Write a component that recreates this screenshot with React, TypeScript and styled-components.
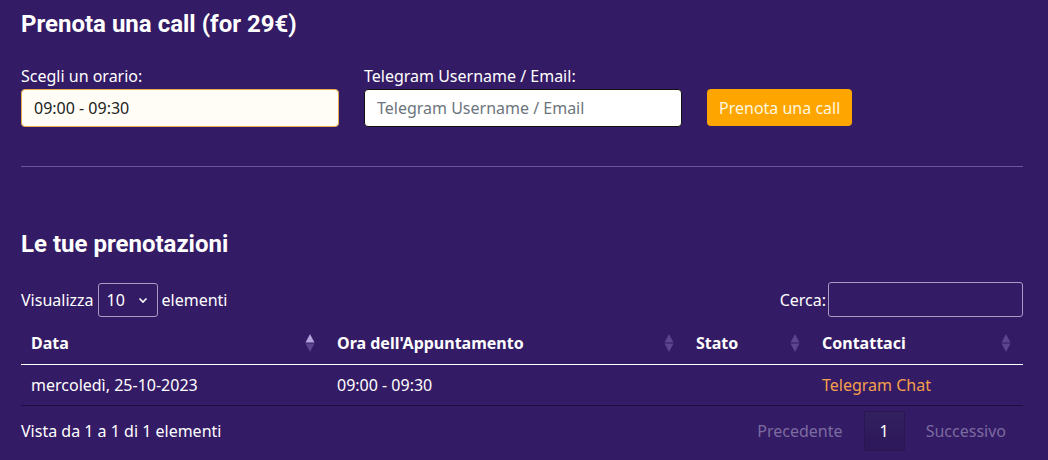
import React, { useState } from 'react';
import styled, { createGlobalStyle } from 'styled-components';

const GlobalStyle = createGlobalStyle`
  html, body {
    margin: 0;
    padding: 0;
    background: #341b65;
  }
  body {
    font-family: 'Noto Sans', 'Open Sans', sans-serif;
    color: #ffffff;
    font-size: 16px;
  }
  * { box-sizing: border-box; }
`;

const Page = styled.div`
  padding: 0 25px 0 21px;
  min-height: 460px;
`;

const Heading = styled.h2<{ $top: number }>`
  font-family: Roboto, 'Liberation Sans', sans-serif;
  font-weight: 700;
  font-size: 24px;
  line-height: 28px;
  margin: 0;
  padding-top: ${(p) => p.$top}px;
`;

const FormRow = styled.form`
  display: flex;
  align-items: flex-end;
  gap: 25px;
  margin-top: 27px;
`;

const Field = styled.label`
  display: flex;
  flex-direction: column;
  gap: 2px;
  font-size: 16px;
  line-height: 22px;
`;

const TextInput = styled.input<{ $focused?: boolean }>`
  width: 318px;
  height: 38px;
  border-radius: 4px;
  border: 1px solid ${(p) => (p.$focused ? '#e8a94c' : '#111')};
  background: ${(p) => (p.$focused ? '#fffdf6' : '#fff')};
  padding: 0 12px;
  font-family: 'Noto Sans', sans-serif;
  font-size: 16px;
  color: #222;
  outline: none;
  &::placeholder { color: #6c757d; }
`;

const SubmitButton = styled.button`
  height: 37px;
  padding: 0 12px;
  margin-bottom: 1px;
  background: #ffa500;
  color: #fff7df;
  border: none;
  border-radius: 4px;
  font-family: 'Noto Sans', sans-serif;
  font-size: 16px;
`;

const Divider = styled.hr`
  border: none;
  border-top: 1px solid #6b55a0;
  margin: 39px 0 0;
`;

const Controls = styled.div`
  display: flex;
  justify-content: space-between;
  align-items: center;
  margin-top: 24px;
  font-size: 16px;
`;

const Inline = styled.label`
  display: flex;
  align-items: center;
  gap: 4px;
`;

const Select = styled.select`
  appearance: none;
  width: 60px;
  height: 34px;
  border: 1px solid #a89cc4;
  border-radius: 3px;
  background: transparent url("data:image/svg+xml,%3Csvg xmlns='http://www.w3.org/2000/svg' width='10' height='8' viewBox='0 0 10 8'%3E%3Cpath d='M1.5 2.5 5 6l3.5-3.5' fill='none' stroke='%23fff' stroke-width='1.6'/%3E%3C/svg%3E") no-repeat right 9px center;
  color: #fff;
  font-family: 'Noto Sans', sans-serif;
  font-size: 16px;
  padding: 0 0 0 8px;
`;

const SearchInput = styled.input`
  width: 195px;
  height: 35px;
  border: 1px solid #a89cc4;
  border-radius: 3px;
  background: transparent;
  color: #fff;
  margin-left: -2px;
`;

const Table = styled.table`
  width: 100%;
  border-collapse: collapse;
  margin-top: 5px;
  font-size: 16px;
`;

const Th = styled.th<{ $w: number }>`
  width: ${(p) => p.$w}px;
  text-align: left;
  font-weight: 700;
  padding: 8px 10px;
  height: 42px;
  border-bottom: 1px solid #ffffff;
`;

const ThInner = styled.div`
  display: flex;
  justify-content: space-between;
  align-items: center;
  padding-right: 2px;
`;

const Td = styled.td`
  padding: 8px 10px;
  height: 41px;
  border-bottom: 1px solid #1e0d40;
`;

const Link = styled.a`
  color: #f5a04a;
  text-decoration: none;
`;

const Footer = styled.div`
  display: flex;
  justify-content: space-between;
  align-items: center;
  margin-top: 5px;
`;

const Pager = styled.div`
  display: flex;
  align-items: center;
`;

const PageLink = styled.span<{ $active?: boolean }>`
  height: 40px;
  display: flex;
  align-items: center;
  padding: 0 ${(p) => (p.$active ? 15 : 16)}px;
  margin: 0 ${(p) => (p.$active ? 4 : 0)}px;
  color: ${(p) => (p.$active ? '#ffffff' : '#7b6ba0')};
  background: ${(p) => (p.$active ? 'linear-gradient(#33205f, #2c185a)' : 'transparent')};
  border: 1px solid ${(p) => (p.$active ? '#2a1650' : 'transparent')};
  border-radius: 2px;
`;

const SortIcon = ({ active }: { active?: boolean }) => (
  <svg width="10" height="20" viewBox="0 0 10 20">
    <path d="M5 1 9.5 9.5H0.5Z" fill={active ? '#b3a3dc' : '#5c4590'} />
    <path d="M5 19 9.5 10.5H0.5Z" fill="#5c4590" />
  </svg>
);

const columns = [
  { label: 'Data', w: 306, active: true },
  { label: "Ora dell'Appuntamento", w: 359 },
  { label: 'Stato', w: 126 },
  { label: 'Contattaci', w: 211 },
];

export default function App() {
  const [slot, setSlot] = useState('09:00 - 09:30');
  return (
    <>
      <GlobalStyle />
      <Page>
        <Heading $top={10}>Prenota una call (for 29€)</Heading>
        <FormRow onSubmit={(e) => e.preventDefault()}>
          <Field>
            Scegli un orario:
            <TextInput $focused value={slot} onChange={(e) => setSlot(e.target.value)} />
          </Field>
          <Field>
            Telegram Username / Email:
            <TextInput placeholder="Telegram Username / Email" />
          </Field>
          <SubmitButton type="submit">Prenota una call</SubmitButton>
        </FormRow>
        <Divider />
        <Heading $top={63}>Le tue prenotazioni</Heading>
        <Controls>
          <Inline>
            Visualizza
            <Select defaultValue="10">
              <option>10</option>
              <option>25</option>
              <option>50</option>
            </Select>
            elementi
          </Inline>
          <Inline>
            Cerca:
            <SearchInput />
          </Inline>
        </Controls>
        <Table>
          <thead>
            <tr>
              {columns.map((c) => (
                <Th key={c.label} $w={c.w}>
                  <ThInner>
                    {c.label}
                    <SortIcon active={c.active} />
                  </ThInner>
                </Th>
              ))}
            </tr>
          </thead>
          <tbody>
            <tr>
              <Td>mercoledì, 25-10-2023</Td>
              <Td>09:00 - 09:30</Td>
              <Td></Td>
              <Td>
                <Link href="#">Telegram Chat</Link>
              </Td>
            </tr>
          </tbody>
        </Table>
        <Footer>
          <span>Vista da 1 a 1 di 1 elementi</span>
          <Pager>
            <PageLink>Precedente</PageLink>
            <PageLink $active>1</PageLink>
            <PageLink>Successivo</PageLink>
          </Pager>
        </Footer>
      </Page>
    </>
  );
}
